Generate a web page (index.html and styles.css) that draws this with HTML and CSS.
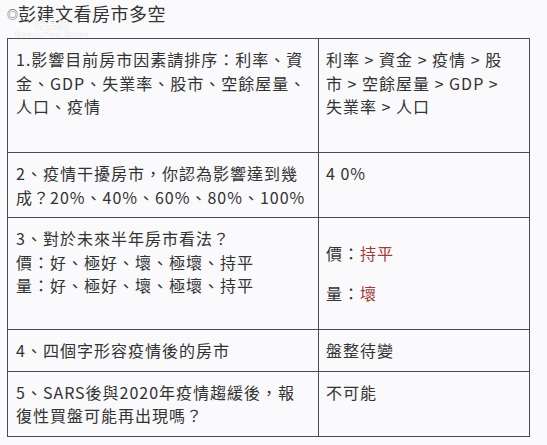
FILE: index.html
```html
<!DOCTYPE html>
<html lang="zh-Hant">
<head>
<meta charset="utf-8">
<link rel="stylesheet" href="styles.css">
</head>
<body>
<div class="page">
  <div class="header">
    <h1 class="title"><span class="mark">◎</span>彭建文看房市多空</h1>
    <div class="watermark"><span class="wm-cn">好房網</span><span class="wm-en">HouseFun News</span></div>
  </div>
  <table class="survey">
    <tr class="r1">
      <td class="q">1.影響目前房市因素請排序：利率、資<br>金、GDP、失業率、股市、空餘屋量、<br>人口、疫情</td>
      <td class="a">利率 &gt; 資金 &gt; 疫情 &gt; 股<br>市 &gt; 空餘屋量 &gt; GDP &gt;<br>失業率 &gt; 人口</td>
    </tr>
    <tr class="r2">
      <td class="q">2、疫情干擾房市，你認為影響達到幾<br>成？20%、40%、60%、80%、100%</td>
      <td class="a">4 0%</td>
    </tr>
    <tr class="r3">
      <td class="q">3、對於未來半年房市看法？<br>價：好、極好、壞、極壞、持平<br>量：好、極好、壞、極壞、持平</td>
      <td class="a mid"><div class="pair"><span>價：<span class="hl">持平</span></span><span>量：<span class="hl">壞</span></span></div></td>
    </tr>
    <tr class="r4">
      <td class="q">4、四個字形容疫情後的房市</td>
      <td class="a">盤整待變</td>
    </tr>
    <tr class="r5">
      <td class="q">5、SARS後與2020年疫情趨緩後，報<br>復性買盤可能再出現嗎？</td>
      <td class="a">不可能</td>
    </tr>
  </table>
</div>
</body>
</html>
```
FILE: styles.css
```css
html, body {
  margin: 0;
  padding: 0;
  background: #fafafc;
}
body {
  font-family: "Noto Sans CJK TC", "Noto Sans", sans-serif;
  color: #333;
}
.page {
  padding: 0 0 0 7px;
}
.header {
  position: relative;
  height: 38px;
}
.title {
  margin: 0;
  font-size: 18px;
  font-weight: normal;
  letter-spacing: 0.5px;
  line-height: 26px;
  color: #333;
}
.mark {
  font-size: 11px;
  letter-spacing: 0;
  vertical-align: 2px;
}
.watermark {
  position: absolute;
  left: 8px;
  top: 20px;
  display: flex;
  flex-direction: column;
  align-items: center;
  color: #fff;
  text-shadow: 0 0 1px #c4c4cc;
}
.wm-cn {
  font-size: 10px;
  line-height: 10px;
  font-weight: bold;
  letter-spacing: 1px;
}
.wm-en {
  font-size: 7px;
  line-height: 8px;
  font-weight: bold;
  letter-spacing: 1.5px;
}
.survey {
  border-collapse: collapse;
  width: 523px;
  font-size: 16px;
  letter-spacing: 1px;
  line-height: 23.5px;
}
.survey td {
  border: 1px solid #4a4a4a;
  vertical-align: top;
  padding: 9px 6px 8px 8px;
}
.survey td.q {
  width: 296px;
}
.survey td.a {
  padding-left: 7px;
}
.survey td.mid {
  vertical-align: middle;
}
.r1 { height: 114px; }
.r2 { height: 64px; }
.r3 { height: 112px; }
.r4 { height: 39px; }
.r5 { height: 64px; }
.pair {
  display: flex;
  flex-direction: column;
  gap: 16.5px;
}
.hl {
  color: #a23a3a;
}
```
